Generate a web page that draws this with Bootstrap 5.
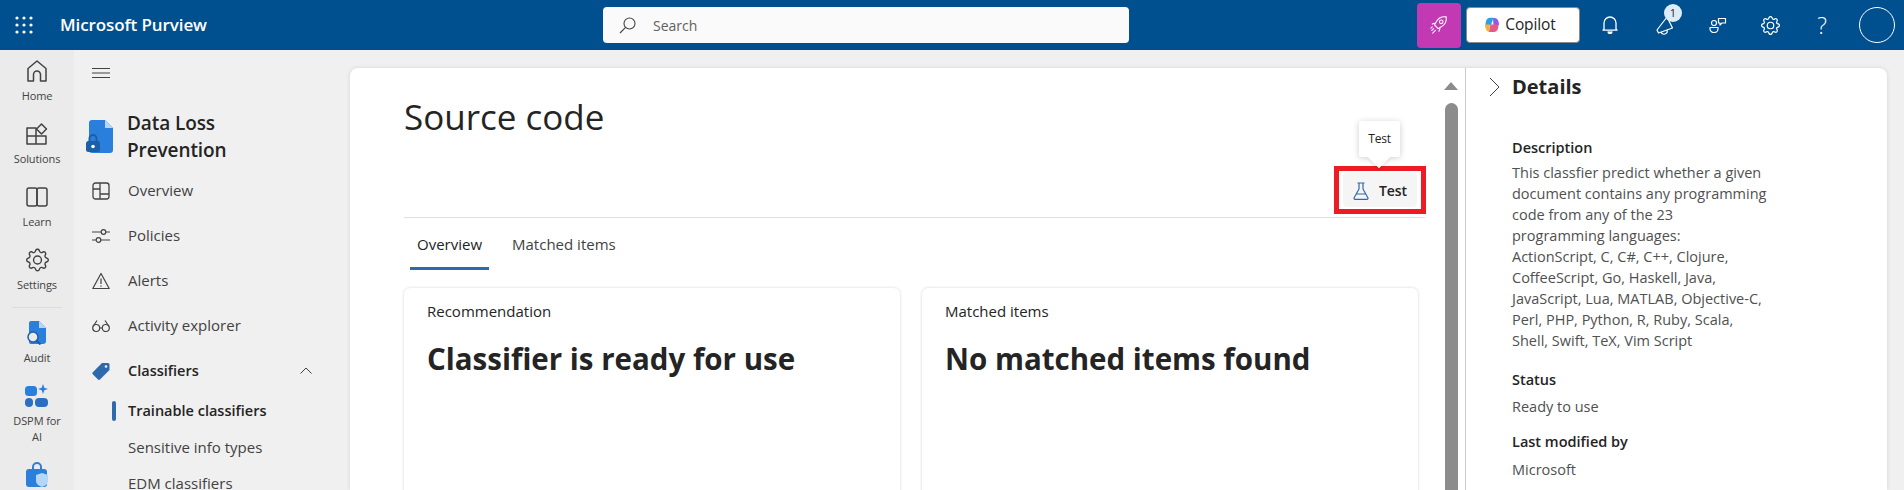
<!DOCTYPE html>
<html lang="en">
<head>
  <meta charset="UTF-8">
  <meta name="viewport" content="width=device-width, initial-scale=1.0">
  <title>Source code - Microsoft Purview</title>
  <link href="https://cdn.jsdelivr.net/npm/bootstrap@5.3.0/dist/css/bootstrap.min.css" rel="stylesheet">
  <style>
    html, body { height: 100%; }
    body { font-family: "Open Sans", "Noto Sans", sans-serif; background: #f0f0f0; color: #242424; overflow: hidden; font-size: 14px; }
    svg { display: block; flex: none; }
    .pv-top { height: 50px; background: #00508f; color: #fff; }
    .pv-top > * { flex: none; }
    .pv-waffle { width: 48px; }
    .pv-brand { font-size: 17px; font-weight: 600; width: 555px; padding-left: 12px; letter-spacing: -.1px; }
    .pv-search { width: 526px; height: 36px; background: #fafafa; border-radius: 4px; padding-left: 16px; gap: 17px; color: #616161; font-size: 14px; }
    .pv-spacer { width: 288px; }
    .pv-rocket { width: 44px; height: 45px; background: #c239b3; border-radius: 4px; }
    .pv-copilot { width: 114px; height: 36px; background: #fff; border: 1px solid #8a8a8a; border-radius: 4px; color: #242424; margin-left: 5px; gap: 5px; padding-right: 6px; font-size: 15.5px; font-weight: 500; letter-spacing: -.1px; }
    .pv-topicon { width: 52px; height: 46px; }
    .pv-help { font-size: 23px; font-weight: 300; line-height: 1; }
    .pv-ring { width: 36px; height: 36px; border: 1px solid #fff; border-radius: 50%; margin-left: 11px; }
    .pv-count { position: absolute; top: 2px; left: 24px; width: 18px; height: 18px; border-radius: 50%; background: #deecf9; color: #242424; font-size: 11px; line-height: 18px; text-align: center; }
    .pv-below { height: 440px; overflow: hidden; }
    .pv-rail { width: 74px; background: #ebebeb; padding-top: 9px; }
    .pv-railitem { height: 63px; color: #424242; font-size: 11px; letter-spacing: -.1px; line-height: 16px; }
    .pv-railitem span { margin-top: 5px; }
    .pv-railsep { width: 50px; height: 1px; background: #dcdcdc; margin: -4px auto 12px; }
    .pv-side { width: 276px; padding: 0 0 0 18px; }
    .pv-burger { height: 46px; }
    .pv-dlp { gap: 14px; margin: 9px 0 0 -6px; height: 63px; align-items: center; }
    .pv-dlptitle { font-size: 19px; font-weight: 600; line-height: 27px; letter-spacing: -.1px; }
    .pv-navrow { height: 45px; gap: 18px; color: #424242; font-size: 15px; width: 220px; }
    .pv-navrow.pv-strong { font-weight: 600; color: #242424; font-size: 14.5px; }
    .pv-subrow { height: 36px; padding-left: 36px; color: #424242; position: relative; font-size: 15px; line-height: 14px; }
    .pv-subrow.pv-end { height: 25px; padding-top: 11px; }
    .pv-subrow.pv-on { font-weight: 600; color: #242424; font-size: 14.5px; }
    .pv-subrow.pv-on::before { content: ""; position: absolute; left: 20px; top: 8px; width: 4px; height: 20px; background: #2f69ad; border-radius: 2px; }
    .pv-shell { margin: 18px 17px 0 0; background: #fff; border-radius: 8px 8px 0 0; box-shadow: 0 0 4px rgba(0,0,0,.12); min-width: 0; }
    .pv-main { width: 1116px; border-right: 1px solid #ccc; min-width: 0; flex: none; }
    .pv-content { width: 1088px; padding-left: 54px; flex: none; }
    .pv-title { font-size: 35px; font-weight: 400; line-height: 44px; margin: 27px 0 0; }
    .pv-bar { height: 79px; border-bottom: 1px solid #e0e0e0; width: 1021px; padding-bottom: 3px; }
    .pv-mark { position: relative; width: 92px; height: 48px; border: 5px solid #ed1c24; padding: 2px 4px; margin-right: -1px; flex: none; }
    .pv-testbtn { height: 34px; width: 100%; background: #f5f5f5; border-radius: 4px; gap: 10px; font-weight: 600; padding: 1px 0 0 10px; letter-spacing: -.1px; }
    .pv-tip { position: absolute; left: 20px; top: -50px; width: 41px; height: 36px; background: #fff; font-size: 12px; box-shadow: 0 1px 6px rgba(0,0,0,.2); border-radius: 2px; letter-spacing: -.2px; }
    .pv-tip::after { content: ""; position: absolute; left: 12px; bottom: -8px; width: 16px; height: 16px; background: #fff; transform: rotate(45deg); box-shadow: 2px 2px 3px rgba(0,0,0,.08); }
    .pv-tabs { height: 52px; padding-left: 6px; gap: 16px; }
    .pv-tab { height: 52px; padding: 15px 7px 0; position: relative; color: #424242; font-size: 15px; }
    .pv-tab.pv-on { color: #242424; font-weight: 500; }
    .pv-tab.pv-on::after { content: ""; position: absolute; left: 0; right: 0; bottom: 0; height: 3px; background: #2f69ad; }
    .pv-cards { gap: 22px; margin-top: 18px; width: 1014px; }
    .pv-tile { width: 496px; height: 260px; border: 0; border-radius: 6px; box-shadow: 0 0 3px rgba(0,0,0,.18); padding: 13px 23px; flex: none; }
    .pv-tilelabel { font-size: 15px; font-weight: 500; line-height: 20px; }
    .pv-tilehead { font-size: 29.5px; font-weight: 700; line-height: 40px; margin: 18px 0 0; }
    .pv-scroll { width: 27px; padding-left: 6px; flex: none; }
    .pv-arrow { width: 0; height: 0; border: 7px solid transparent; border-top: 0; border-bottom: 8px solid #8c8c8c; margin: 14px 0 0 0; }
    .pv-thumb { width: 13px; background: #8c8c8c; border-radius: 7px 7px 0 0; height: 400px; margin: 13px 0 0 1px; }
    .pv-details { padding: 0 0 0 23px; flex: 1; min-width: 0; }
    .pv-dethead { height: 38px; gap: 12px; font-size: 20px; font-weight: 700; }
    .pv-detbody { padding-left: 23px; margin-top: 32px; }
    .pv-detlabel { font-size: 14.5px; font-weight: 600; line-height: 20px; margin-top: 19px; }
    .pv-detlabel.pv-first { margin-top: 0; }
    .pv-detlabel.pv-end { margin-top: 15px; }
    .pv-dettext { font-size: 14.5px; line-height: 21px; color: #505050; margin: 6px 0 0; }
    .pv-dettext.pv-first { margin-top: 4px; }
    .pv-dettext.pv-end { margin-top: 7px; }
  </style>
</head>
<body>
<svg width="0" height="0" class="position-absolute">
  <symbol id="gear" viewBox="0 0 16 16"><path fill="currentColor" d="M8 4.754a3.246 3.246 0 1 0 0 6.492 3.246 3.246 0 0 0 0-6.492zM5.754 8a2.246 2.246 0 1 1 4.492 0 2.246 2.246 0 0 1-4.492 0z"/><path fill="currentColor" d="M9.796 1.343c-.527-1.79-3.065-1.79-3.592 0l-.094.319a.873.873 0 0 1-1.255.52l-.292-.16c-1.64-.892-3.433.902-2.54 2.541l.159.292a.873.873 0 0 1-.52 1.255l-.319.094c-1.79.527-1.79 3.065 0 3.592l.319.094a.873.873 0 0 1 .52 1.255l-.16.292c-.892 1.64.901 3.434 2.541 2.54l.292-.159a.873.873 0 0 1 1.255.52l.094.319c.527 1.79 3.065 1.79 3.592 0l.094-.319a.873.873 0 0 1 1.255-.52l.292.16c1.64.893 3.434-.902 2.54-2.541l-.159-.292a.873.873 0 0 1 .52-1.255l.319-.094c1.79-.527 1.79-3.065 0-3.592l-.319-.094a.873.873 0 0 1-.52-1.255l.16-.292c.893-1.64-.902-3.433-2.541-2.54l-.292.159a.873.873 0 0 1-1.255-.52l-.094-.319zm-2.633.283c.246-.835 1.428-.835 1.674 0l.094.319a1.873 1.873 0 0 0 2.693 1.115l.291-.16c.764-.415 1.6.42 1.184 1.185l-.159.292a1.873 1.873 0 0 0 1.116 2.692l.318.094c.835.246.835 1.428 0 1.674l-.319.094a1.873 1.873 0 0 0-1.115 2.693l.16.291c.415.764-.42 1.6-1.185 1.184l-.291-.159a1.873 1.873 0 0 0-2.693 1.116l-.094.318c-.246.835-1.428.835-1.674 0l-.094-.319a1.873 1.873 0 0 0-2.692-1.115l-.292.16c-.764.415-1.6-.42-1.184-1.185l.159-.291A1.873 1.873 0 0 0 1.945 8.93l-.319-.094c-.835-.246-.835-1.428 0-1.674l.319-.094A1.873 1.873 0 0 0 3.06 4.377l-.16-.292c-.415-.764.42-1.6 1.185-1.184l.292.159a1.873 1.873 0 0 0 2.692-1.115l.094-.319z"/></symbol>
</svg>

<header class="pv-top d-flex align-items-center">
  <div class="pv-waffle d-flex justify-content-center">
    <svg width="18" height="18" viewBox="0 0 18 18" fill="#fff"><circle cx="2" cy="2" r="1.6"/><circle cx="9" cy="2" r="1.6"/><circle cx="16" cy="2" r="1.6"/><circle cx="2" cy="9" r="1.6"/><circle cx="9" cy="9" r="1.6"/><circle cx="16" cy="9" r="1.6"/><circle cx="2" cy="16" r="1.6"/><circle cx="9" cy="16" r="1.6"/><circle cx="16" cy="16" r="1.6"/></svg>
  </div>
  <div class="pv-brand">Microsoft Purview</div>
  <div class="pv-search d-flex align-items-center">
    <svg width="17" height="17" viewBox="0 0 17 17" fill="none" stroke="#424242" stroke-width="1.1"><circle cx="10.5" cy="6.5" r="5.5"/><path d="M6.6 10.4 1 16"/></svg>
    <span>Search</span>
  </div>
  <div class="pv-spacer"></div>
  <div class="pv-rocket d-flex align-items-center justify-content-center">
    <svg width="18" height="20" viewBox="0 0 20 22" fill="none" stroke="#fff" stroke-width="1.2" stroke-linecap="round"><path d="M18 2c-5-.6-9 1.500-11 5.500L5 11l4 4 3.500-2C16.500 11 18.600 7 18 2z"/><circle cx="12.500" cy="7.500" r="2"/><path d="M5 9 2.500 10M11 15l-1 3M4 15l-2 2M6 17l-3 3M2.500 13 1 14.500"/></svg>
  </div>
  <div class="pv-copilot d-flex align-items-center justify-content-center">
    <svg width="16" height="16" viewBox="0 0 16 16"><path fill="#2aa0e6" d="M6 .8h3.500L7 8H1.500C1.500 4 3 .8 6 .8z"/><path fill="#8d5ce0" d="M9 1h1.500C13.500 1 15 4 15 8H9.500z"/><path fill="#f2b33c" d="M1 7.500h5L5.500 15C3 15 1 12 1 7.500z"/><path fill="#e8588a" d="M6.500 7.500h8C14.500 12 13 15 10 15H5z"/></svg>
    <span>Copilot</span>
  </div>
  <div class="pv-topicon d-flex align-items-center justify-content-center ms-1">
    <svg width="16" height="18" viewBox="0 0 16 18" fill="none" stroke="#fff" stroke-width="1.3"><path d="M2 13V7a6 6 0 0 1 12 0v6l1 1.200H1z" stroke-linejoin="round"/><path d="M6 15.500a2 2 0 0 0 4 0" fill="#fff"/></svg>
  </div>
  <div class="pv-topicon d-flex align-items-center justify-content-center position-relative ms-1">
    <svg width="22" height="22" viewBox="0 0 22 22" fill="none" stroke="#fff" stroke-width="1.2" stroke-linejoin="round"><path d="M12 3 2 16l1.500 3 14-5z"/><path d="M6 18a3 3 0 0 0 6-2"/></svg>
    <span class="pv-count">1</span>
  </div>
  <div class="pv-topicon d-flex align-items-center justify-content-center">
    <svg width="18" height="18" viewBox="0 0 18 18" fill="none" stroke="#fff" stroke-width="1.200" stroke-linejoin="round"><circle cx="5" cy="7" r="2.500"/><path d="M1 11.500h8v1.500a4 3.500 0 0 1-8 0z"/><path d="M9.500 2.500h7v4.500h-3.500L11 9V7H9.500z"/></svg>
  </div>
  <div class="pv-topicon d-flex align-items-center justify-content-center text-white">
    <svg width="19" height="19"><use href="#gear"/></svg>
  </div>
  <div class="pv-topicon d-flex align-items-center justify-content-center">
    <span class="pv-help">?</span>
  </div>
  <div class="pv-ring"></div>
</header>

<div class="pv-below d-flex">
  <nav class="pv-rail flex-none text-center">
    <div class="pv-railitem d-flex flex-column align-items-center">
      <svg width="22" height="24" viewBox="0 0 22 24" fill="none" stroke="#424242" stroke-width="1.500" stroke-linejoin="round"><path d="M2 22V9.500L11 2l9 7.500V22h-5.500v-6.500a3.500 3.500 0 0 0-7 0V22z"/></svg>
      <span>Home</span>
    </div>
    <div class="pv-railitem d-flex flex-column align-items-center">
      <svg width="22" height="24" viewBox="0 0 22 24" fill="none" stroke="#424242" stroke-width="1.500" stroke-linejoin="round"><path d="M1 6h9v8H1zM1 14h9v8H1zM10 14h10v8H10z"/><path d="M15.500 2l5 5-5 5-5-5z"/></svg>
      <span>Solutions</span>
    </div>
    <div class="pv-railitem d-flex flex-column align-items-center">
      <svg width="22" height="24" viewBox="0 0 22 24" fill="none" stroke="#424242" stroke-width="1.500" stroke-linejoin="round"><rect x="1" y="3" width="10" height="18" rx="2"/><rect x="11" y="3" width="10" height="18" rx="2"/></svg>
      <span>Learn</span>
    </div>
    <div class="pv-railitem d-flex flex-column align-items-center">
      <svg width="23" height="24"><use href="#gear"/></svg>
      <span>Settings</span>
    </div>
    <div class="pv-railsep"></div>
    <div class="pv-railitem d-flex flex-column align-items-center">
      <svg width="24" height="25" viewBox="0 0 24 25"><path fill="#2a7fdc" d="M6 1h8l7 7v13a3 3 0 0 1-3 3H6a2 2 0 0 1-2-2V3a2 2 0 0 1 2-2z"/><path fill="#b5d6f5" d="M14 1l7 7h-7z"/><circle cx="8" cy="17" r="5" fill="#ebebeb" stroke="#1b5fa8" stroke-width="1.500"/><path d="M11.500 20.500l4 4" stroke="#1b5fa8" stroke-width="2"/></svg>
      <span>Audit</span>
    </div>
    <div class="pv-railitem d-flex flex-column align-items-center">
      <svg width="26" height="25" viewBox="0 0 26 25"><rect x="1" y="3" width="12" height="10" rx="3.500" fill="#2a7fdc"/><rect x="1" y="15" width="8" height="9" rx="4" fill="#2a6fc4"/><rect x="11" y="15" width="13" height="9" rx="4" fill="#2a6fc4"/><path fill="#2a7fdc" d="M19 1l1.300 3.700L24 6l-3.700 1.300L19 11l-1.300-3.700L14 6l3.700-1.300z"/></svg>
      <span>DSPM for<br>AI</span>
    </div>
    <div class="pv-railitem d-flex flex-column align-items-center pt-3">
      <svg width="24" height="26" viewBox="0 0 24 26"><path d="M8 7V5a4 4 0 0 1 8 0v2" fill="none" stroke="#2a7fdc" stroke-width="2"/><rect x="1" y="7" width="21" height="18" rx="3" fill="#2a7fdc"/><path fill="#b5d6f5" d="M17 11l6 2v6c0 3-3 5-6 6-3-1-6-3-6-6v-6z"/></svg>
    </div>
  </nav>

  <aside class="pv-side flex-none">
    <div class="pv-burger d-flex align-items-center">
      <svg width="18" height="10" viewBox="0 0 18 10" stroke="#424242" stroke-width="1"><path d="M0 .5h18M0 5h18M0 9.500h18"/></svg>
    </div>
    <div class="pv-dlp d-flex">
      <svg width="27" height="33" viewBox="0 0 27 33"><path fill="#2a7fdc" d="M6 0h13l8 8v22a3 3 0 0 1-3 3H6a3 3 0 0 1-3-3V3a3 3 0 0 1 3-3z"/><path fill="#b5d6f5" d="M19 0l8 8h-8z"/><rect x="0" y="21" width="14" height="11" rx="2.500" fill="#1b5fa8"/><path d="M3.500 21v-2.500a3.500 3.500 0 0 1 7 0V21" fill="none" stroke="#1b5fa8" stroke-width="2"/><circle cx="7" cy="26.500" r="1.800" fill="#fff"/></svg>
      <div class="pv-dlptitle">Data Loss<br>Prevention</div>
    </div>
    <div class="pv-navrow d-flex align-items-center">
      <svg width="18" height="18" viewBox="0 0 18 18" fill="none" stroke="#424242" stroke-width="1.300"><rect x="1" y="1" width="16" height="16" rx="2.500"/><path d="M1 7h7M8 1v16M8 12h9"/></svg>
      <span>Overview</span>
    </div>
    <div class="pv-navrow d-flex align-items-center">
      <svg width="18" height="18" viewBox="0 0 18 18" fill="none" stroke="#424242" stroke-width="1.200"><path d="M0 5h9M14 5h4M0 13h4M9 13h9"/><circle cx="11.500" cy="5" r="2.300"/><circle cx="6.500" cy="13" r="2.300"/></svg>
      <span>Policies</span>
    </div>
    <div class="pv-navrow d-flex align-items-center">
      <svg width="18" height="18" viewBox="0 0 18 18" fill="none" stroke="#424242" stroke-width="1.200" stroke-linejoin="round"><path d="M9 1.500 .8 16.500h16.400z"/><path d="M9 6.500v5.500M9 13.500v1.200"/></svg>
      <span>Alerts</span>
    </div>
    <div class="pv-navrow d-flex align-items-center">
      <svg width="18" height="18" viewBox="0 0 18 18" fill="none" stroke="#424242" stroke-width="1.200"><circle cx="4.200" cy="11" r="3.500"/><circle cx="13.800" cy="11" r="3.500"/><path d="M7.700 11h2.600M1 9.500 5 3.500M17 9.500 13 3.500"/></svg>
      <span>Activity explorer</span>
    </div>
    <div class="pv-navrow pv-strong d-flex align-items-center">
      <svg width="18" height="18" viewBox="0 0 18 18"><path fill="#2f69ad" d="M10 1h6a1.500 1.500 0 0 1 1.500 1.500V8L8 17.500a1.500 1.500 0 0 1-2 0L.8 12.300a1.500 1.500 0 0 1 0-2z"/><circle cx="14" cy="4.500" r="1.300" fill="#f0f0f0"/></svg>
      <span class="flex-grow-1">Classifiers</span>
      <svg width="12" height="7" viewBox="0 0 12 7" fill="none" stroke="#424242"><path d="M.5 6.500 6 1l5.500 5.500"/></svg>
    </div>
    <div class="pv-subrow pv-on d-flex align-items-center">Trainable classifiers</div>
    <div class="pv-subrow d-flex align-items-center">Sensitive info types</div>
    <div class="pv-subrow pv-end d-flex align-items-start">EDM classifiers</div>
  </aside>

  <div class="pv-shell d-flex flex-grow-1">
    <main class="pv-main d-flex">
      <div class="pv-content">
        <h1 class="pv-title">Source code</h1>
        <div class="pv-bar d-flex justify-content-end align-items-end">
          <div class="pv-mark">
            <div class="pv-tip d-flex align-items-center justify-content-center">Test</div>
            <div class="pv-testbtn d-flex align-items-center">
              <svg width="16" height="18" viewBox="0 0 16 18" fill="none" stroke="#2f69ad" stroke-width="1.200" stroke-linejoin="round"><path d="M4.500 1h7M6 1v6L1 16a1 1 0 0 0 1 1.300h12a1 1 0 0 0 1-1.300L10 7V1M3.500 12h9"/></svg>
              <span>Test</span>
            </div>
          </div>
        </div>
        <div class="pv-tabs d-flex">
          <div class="pv-tab pv-on">Overview</div>
          <div class="pv-tab">Matched items</div>
        </div>
        <div class="pv-cards d-flex">
          <div class="card pv-tile">
            <div class="pv-tilelabel">Recommendation</div>
            <h2 class="pv-tilehead">Classifier is ready for use</h2>
          </div>
          <div class="card pv-tile">
            <div class="pv-tilelabel">Matched items</div>
            <h2 class="pv-tilehead">No matched items found</h2>
          </div>
        </div>
      </div>
      <div class="pv-scroll">
        <div class="pv-arrow"></div>
        <div class="pv-thumb"></div>
      </div>
    </main>
    <section class="pv-details">
      <div class="pv-dethead d-flex align-items-center">
        <svg width="11" height="20" viewBox="0 0 11 20" fill="none" stroke="#424242" stroke-width="1"><path d="M1 1l9 9-9 9"/></svg>
        <span>Details</span>
      </div>
      <div class="pv-detbody">
        <div class="pv-detlabel pv-first">Description</div>
        <p class="pv-dettext pv-first">This classfier predict whether a given<br>document contains any programming<br>code from any of the 23<br>programming languages:<br>ActionScript, C, C#, C++, Clojure,<br>CoffeeScript, Go, Haskell, Java,<br>JavaScript, Lua, MATLAB, Objective-C,<br>Perl, PHP, Python, R, Ruby, Scala,<br>Shell, Swift, TeX, Vim Script</p>
        <div class="pv-detlabel">Status</div>
        <p class="pv-dettext">Ready to use</p>
        <div class="pv-detlabel pv-end">Last modified by</div>
        <p class="pv-dettext pv-end">Microsoft</p>
      </div>
    </section>
  </div>
</div>
<script src="https://cdn.jsdelivr.net/npm/bootstrap@5.3.0/dist/js/bootstrap.bundle.min.js"></script>
</body>
</html>
